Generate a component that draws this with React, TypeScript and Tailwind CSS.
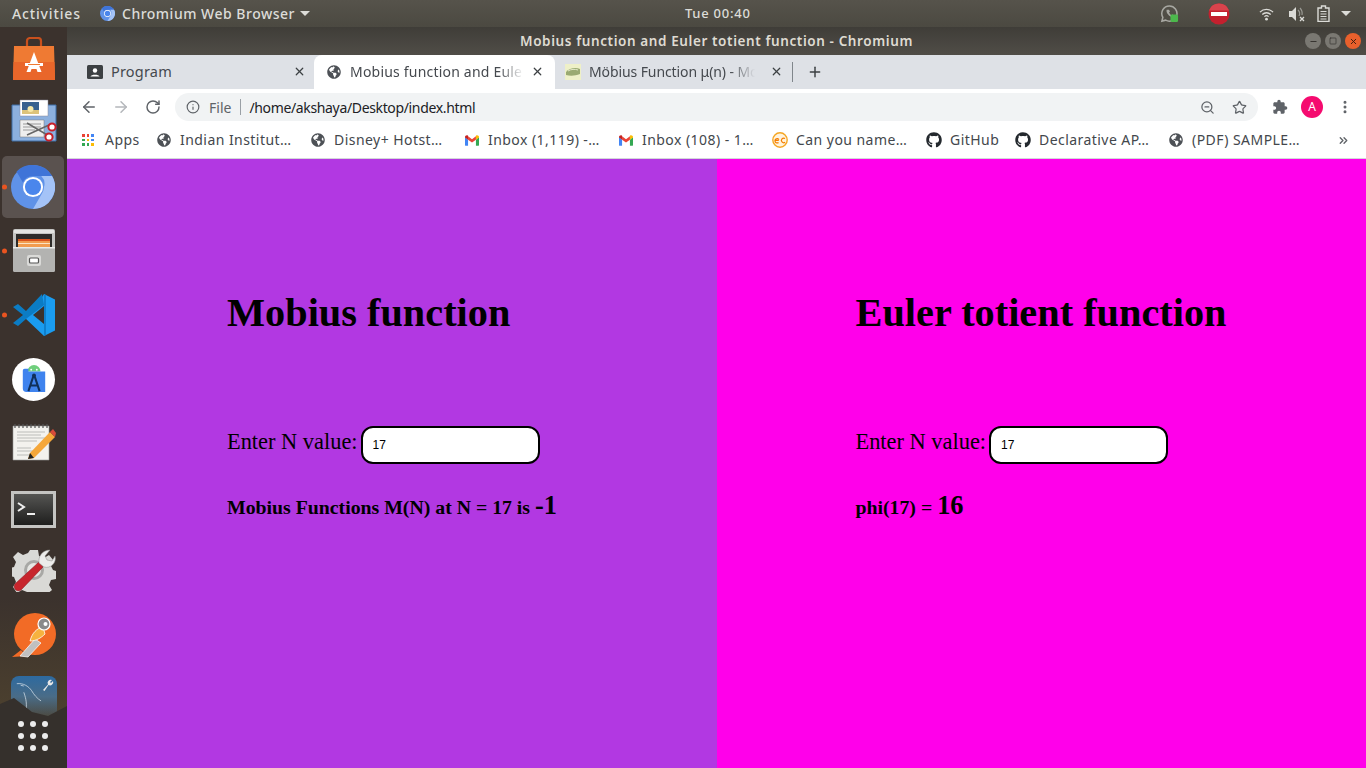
import { ArrowLeft, ArrowRight, RotateCw, Info, ZoomOut, Star, X, Plus, Minus, Square, ChevronsRight, EllipsisVertical } from "lucide-react";
import { FaGithub, FaGlobeAmericas } from "react-icons/fa";
import { MdExtension } from "react-icons/md";

const ui = "font-['Noto_Sans',sans-serif]";

function Globe() {
  return <FaGlobeAmericas className="h-[14px] w-[14px] shrink-0 text-[#4d5156]" />;
}

function Gmail() {
  return (
    <svg viewBox="0 0 16 12" className="h-[11px] w-[14px] shrink-0">
      <path d="M0 2v9a1 1 0 0 0 1 1h2.500V5z" fill="#4285f4" />
      <path d="M16 2v9a1 1 0 0 1-1 1h-2.500V5z" fill="#34a853" />
      <path d="M3.500 5 8 8.400 12.500 5V1.200L8 4.600 3.500 1.200z" fill="#ea4335" />
      <path d="M0 2c0-1.700 2.200-2.600 3.500-1.500V5L0 2.500z" fill="#c5221f" />
      <path d="M16 2c0-1.700-2.200-2.600-3.500-1.500V5L16 2.500z" fill="#fbbc04" />
    </svg>
  );
}

function AppsGrid() {
  const colors = ["#ea4335", "#ea4335", "#4285f4", "#34a853", "#fbbc04", "#4285f4", "#34a853", "#34a853", "#fbbc04"];
  return (
    <div className="grid h-[12px] w-[12px] shrink-0 grid-cols-3 gap-[2px]">
      {colors.map((c, i) => (
        <span key={i} style={{ backgroundColor: c }} />
      ))}
    </div>
  );
}

function EcIcon() {
  return (
    <svg viewBox="0 0 16 16" className="h-[16px] w-[16px] shrink-0">
      <circle cx="8" cy="8" r="7.200" fill="#fff3dc" stroke="#f5a623" strokeWidth="1.400" />
      <path d="M2.800 8.400h4M7 7.500a2.200 2.200 0 1 0-.5 3M13 6.500a2.300 2.300 0 1 0 0 3.800" fill="none" stroke="#f57c00" strokeWidth="1.200" />
    </svg>
  );
}

function Bookmark({ icon, label, className, gap = "ml-[9px]" }: { icon: React.ReactNode; label: string; className: string; gap?: string }) {
  return (
    <div className={`flex h-full shrink-0 items-center ${className}`}>
      {icon}
      <span className={`${gap} whitespace-nowrap pb-[2px] text-[14px] tracking-[0.45px] text-[#43474c]`}>{label}</span>
    </div>
  );
}

function ChromiumIcon({ size }: { size: string }) {
  return (
    <svg viewBox="0 0 48 48" className={size}>
      <circle cx="24" cy="24" r="24" fill="#5f92e8" />
      <path d="M24 0a24 24 0 0 1 20.800 12H24a12 12 0 0 0-11 7L6 7A24 24 0 0 1 24 0z" fill="#3f74d8" />
      <path d="M44.800 12A24 24 0 0 1 24 48l10.400-18A12 12 0 0 0 36 24a12 12 0 0 0-3-12z" fill="#a4c3f7" />
      <circle cx="24" cy="24" r="11" fill="#fff" />
      <circle cx="24" cy="24" r="8.800" fill="#4a86ec" />
    </svg>
  );
}

function RunningDot() {
  return <span className="absolute left-[2px] top-1/2 h-[5px] w-[5px] -translate-y-1/2 rounded-full bg-[#e95420]" />;
}

function StoreIcon() {
  return (
    <svg viewBox="0 0 42 43" className="h-[43px] w-[42px]">
      <path d="M14 11V4a3 3 0 0 1 3-3h8a3 3 0 0 1 3 3v7" fill="none" stroke="#c9501d" strokeWidth="2.200" />
      <path d="M1 9h40l1 34H0z" fill="#ef7a33" />
      <path d="M.5 25h41l.5 18H0z" fill="#e9662a" />
      <path d="M21 15 13.500 35h4l1-3h5l1 3h4z" fill="#fff" />
      <path d="M12 26h18v3H12z" fill="#fff" />
      <path d="M15 27h12v1H15z" fill="#ef7a33" />
    </svg>
  );
}

function ScreenshotIcon() {
  return (
    <svg viewBox="0 0 46 44" className="h-[44px] w-[46px]">
      <path d="M1 6h44v36H1z" fill="#8cb0de" stroke="#3f6fa8" />
      <path d="M9 1h28v16H9z" fill="#fff" stroke="#889" strokeWidth="0.500" />
      <path d="M11 3h17v12H11z" fill="#38618f" />
      <path d="M11 11h17v4H11z" fill="#dcc37a" />
      <circle cx="19.500" cy="10" r="3" fill="#f6e8a8" />
      <path d="M9 21h24v17H9z" fill="#eee" stroke="#777" strokeWidth="0.500" />
      <path d="M12 25h18M12 28h18M12 31h12" stroke="#999" />
      <path d="M16 24 38 37M16 36l22-10" stroke="#666" strokeWidth="1.500" />
      <circle cx="41" cy="28" r="3.600" fill="#fff" stroke="#c8202a" strokeWidth="2" />
      <circle cx="38" cy="38" r="3.600" fill="#fff" stroke="#c8202a" strokeWidth="2" />
    </svg>
  );
}

function FilesIcon() {
  return (
    <svg viewBox="0 0 42 43" className="h-[43px] w-[42px]">
      <rect x="0" y="0" width="42" height="43" rx="2" fill="#c4c4c2" />
      <path d="M1 1h40v3H1z" fill="#e4e4e2" />
      <path d="M3 5h36v13H3z" fill="#2d2b29" />
      <path d="M5 10h32v8H5z" fill="#f29c4f" />
      <path d="M5 10h32v2H5z" fill="#d9531e" />
      <path d="M5 14h32v1H5z" fill="#fce3c2" />
      <path d="M0 18h42v23a2 2 0 0 1-2 2H2a2 2 0 0 1-2-2z" fill="#b3b3b1" />
      <path d="M0 18h42v1.500H0z" fill="#ececea" />
      <rect x="14" y="26" width="14" height="11" rx="2" fill="#dadad8" />
      <rect x="16.500" y="29" width="9" height="5" rx="1" fill="#fff" stroke="#555" strokeWidth="1.200" />
    </svg>
  );
}

function VsCodeIcon() {
  return (
    <svg viewBox="0 0 42 42" className="h-[42px] w-[42px]">
      <path d="M31 0 42 5.500v31L31 42 12 24l8-7z" fill="#1a9cf0" />
      <path d="M31 0 31 42 33 41V1z" fill="#0f7fcc" />
      <path d="M31 11 13 25 5 32 0 29l10-8L0 13l5-3 8 7L29 0z" fill="#0b7cc4" />
      <path d="M31 12v18l-11-9z" fill="#3b322d" />
    </svg>
  );
}

function StudioIcon() {
  return (
    <div className="flex h-[43px] w-[43px] items-center justify-center rounded-full bg-white">
      <svg viewBox="0 0 30 32" className="h-[30px] w-[28px]">
        <path d="M8 8a7 7 0 0 1 14 0z" fill="#6fcf7c" />
        <circle cx="12" cy="6" r="1" fill="#fff" />
        <circle cx="18" cy="6" r="1" fill="#fff" />
        <path d="M3 7a2 2 0 0 1 2-2h4v3h18v22H7a4 4 0 0 1-4-4z" fill="#3f83ee" />
        <path d="M15 11 9 29M15 11l6 18M11 23h8" fill="none" stroke="#10305a" strokeWidth="2.200" />
        <circle cx="15" cy="12" r="2" fill="#10305a" />
      </svg>
    </div>
  );
}

function NotepadIcon() {
  return (
    <svg viewBox="0 0 46 38" className="h-[38px] w-[46px]">
      <path d="M2 3h36v34H2z" fill="#f3f2ee" stroke="#999" strokeWidth="0.600" />
      <path d="M4 1v4M8 1v4M12 1v4M16 1v4M20 1v4M24 1v4M28 1v4M32 1v4M36 1v4" stroke="#555" strokeWidth="1.200" />
      <path d="M6 9h28M6 12h24M6 15h28M6 18h20M6 25h14M6 28h18M6 32h16" stroke="#b5b5b2" strokeWidth="0.900" />
      <path d="M19 30 39 9l5 5-21 21-6 1z" fill="#f5a73a" />
      <path d="M39 9l3-3 3 4-1 4z" fill="#d84a3a" />
      <path d="M17 36l2-6 4 5z" fill="#222" />
    </svg>
  );
}

function TerminalIcon() {
  return (
    <div className="h-[37px] w-[45px] border-[3px] border-[#c4c4c2] bg-[linear-gradient(#555553,#1e1e1d)] pl-[3px] pt-[6px]">
      <svg viewBox="0 0 30 20" className="h-[20px] w-[30px]">
        <path d="M1 3l6 4-6 4" fill="none" stroke="#eee" strokeWidth="2" />
        <path d="M10 14h8" stroke="#eee" strokeWidth="2" />
      </svg>
    </div>
  );
}

function SettingsIcon() {
  return (
    <svg viewBox="0 0 44 44" className="h-[44px] w-[44px]">
      <path
        d="M18 2h8l1 6 5 2 5-3 5 6-3 5 2 4 3 1v8l-5 1-2 5 3 5-6 5-5-3-4 1-1 3h-8l-1-4-5-2-5 3-4-6 3-5-2-5-5-1v-8l5-1 2-5-3-5 5-5 5 3 5-2z"
        fill="#d9d9d6"
      />
      <circle cx="22" cy="22" r="10" fill="#a8a8a5" />
      <circle cx="22" cy="22" r="7" fill="#e6e6e3" />
      <path d="M4 35 27 14l4 5L9 42a3.500 3.500 0 0 1-5-7z" fill="#c7252c" stroke="#8f1a20" strokeWidth="0.600" />
      <path d="M27 15c-1-6 3-13 11-13l-5 6 2 4 5 1 3-5c2 7-5 13-11 11z" fill="#ececea" stroke="#8d8d8a" strokeWidth="0.500" />
    </svg>
  );
}

function PostmanIcon() {
  return (
    <svg viewBox="0 0 44 45" className="h-[45px] w-[44px]">
      <circle cx="23" cy="21" r="21" fill="#f26b26" />
      <path d="M0 44 9 37l6 6z" fill="#f26b26" />
      <path d="M8 43 23 26l6 4-13 14z" fill="#c0c0c0" stroke="#fff" strokeWidth="0.700" />
      <path d="M18 28c2-8 7-13 13-14l2 7c-4 4-9 7-15 7z" fill="#f6b23f" stroke="#fff" strokeWidth="0.800" />
      <circle cx="32" cy="11" r="6" fill="#8a8a8a" stroke="#fff" strokeWidth="1.200" />
      <circle cx="33.500" cy="11" r="2" fill="#fff" />
    </svg>
  );
}

function MysqlIcon() {
  return (
    <div className="relative h-[46px] w-[46px] rounded-t-[8px] bg-[linear-gradient(#2d6aa0,#4a6c87_45%,rgba(80,70,50,0.1))]">
      <svg viewBox="0 0 46 40" className="absolute left-[5px] top-[4px] h-[34px] w-[36px]">
        <path d="M1 3c8-1 15 3 19 9 3 5 7 10 12 13M10 14c2 6 4 12 3 22M6 5l4 1" fill="none" stroke="#cfdbe6" strokeWidth="1" />
      </svg>
      <svg viewBox="0 0 12 12" className="absolute right-[3px] top-[3px] h-[12px] w-[12px]">
        <path d="M1 11 6 5.500A3.200 3.200 0 0 1 10 1L8 3l1 1 2-2a3.200 3.200 0 0 1-4.500 4L2.500 12z" fill="#e8e8e8" />
      </svg>
    </div>
  );
}

function DockGrid() {
  return (
    <div className="grid grid-cols-3 gap-[6px]">
      {Array.from({ length: 9 }).map((_, i) => (
        <span key={i} className="h-[6px] w-[6px] rounded-full bg-[#ececec]" />
      ))}
    </div>
  );
}

function Dock() {
  return (
    <aside className="relative flex w-[67px] shrink-0 flex-col items-center overflow-hidden bg-[#3b322d]">
      <div className="absolute inset-x-0 bottom-0 h-[170px] bg-[linear-gradient(transparent,#54472f)]" />
      <div className="relative flex h-[63px] w-full items-center justify-center"><StoreIcon /></div>
      <div className="relative flex h-[62px] w-full items-center justify-center"><ScreenshotIcon /></div>
      <div className="relative flex h-[70px] w-full items-center pl-[2px]">
        <div className="flex h-[62px] w-[62px] items-center justify-center rounded-[5px] bg-[#5a524f]">
          <ChromiumIcon size="h-[44px] w-[44px]" />
        </div>
        <RunningDot />
      </div>
      <div className="relative flex h-[57px] w-full items-center justify-center"><RunningDot /><FilesIcon /></div>
      <div className="relative flex h-[72px] w-full items-center justify-center"><RunningDot /><VsCodeIcon /></div>
      <div className="relative flex h-[56px] w-full items-center justify-center"><StudioIcon /></div>
      <div className="relative flex h-[70px] w-full items-center justify-center"><NotepadIcon /></div>
      <div className="relative flex h-[64px] w-full items-center justify-center"><TerminalIcon /></div>
      <div className="relative flex h-[58px] w-full items-center justify-center"><SettingsIcon /></div>
      <div className="relative flex h-[72px] w-full items-center justify-center"><PostmanIcon /></div>
      <div className="relative flex w-full shrink-0 justify-center pt-[5px]"><MysqlIcon /></div>
      <svg viewBox="0 0 67 80" className="absolute bottom-0 left-0 h-[80px] w-[67px]" preserveAspectRatio="none">
        <path d="M0 16 14 10 32 24 48 28 67 18V80H0z" fill="#35302c" />
      </svg>
      <div className="absolute bottom-[17px] left-[18px]"><DockGrid /></div>
    </aside>
  );
}

function TopBar() {
  return (
    <header className="flex h-[27px] items-center bg-[linear-gradient(#56534b,#4b4941)] text-[14px] font-medium text-[#dcdcd8]">
      <span className="ml-[12px] w-[88px] tracking-[0.85px]">Activities</span>
      <ChromiumIcon size="h-[15px] w-[15px] mr-[7px]" />
      <span className="tracking-[0.5px]">Chromium Web Browser</span>
      <span className="ml-[5px] h-0 w-0 border-x-[5px] border-t-[5px] border-x-transparent border-t-[#dcdcd8]" />
      <span className="ml-[375px] text-[13px] tracking-[0.75px]">Tue 00:40</span>
      <div className="ml-auto flex items-center">
        <svg viewBox="0 0 20 20" className="mr-[29px] h-[19px] w-[19px]">
          <path d="M10 2a8 8 0 0 0-7 12l-1 4 4-1a8 8 0 1 0 4-15z" fill="none" stroke="#a8a8a2" strokeWidth="1.600" />
          <path d="M7 6c-1 3 3 8 7 8l1-2-2-1-1 1c-1-.5-2-2-2.500-3l1-1-1-2z" fill="#a8a8a2" />
          <rect x="11" y="11" width="8" height="8" rx="1.500" fill="#4cb84c" />
        </svg>
        <svg viewBox="0 0 22 22" className="mr-[29px] h-[22px] w-[22px]">
          <circle cx="11" cy="11" r="10.500" fill="#c3202e" />
          <path d="M11 .5a10.500 10.500 0 0 1 10 7H1a10.500 10.500 0 0 1 10-7z" fill="#d8434c" />
          <rect x="3" y="9" width="16" height="4" fill="#fff" />
        </svg>
        <svg viewBox="0 0 16 14" className="mr-[14px] h-[14px] w-[15px]">
          <path d="M1 5a10 10 0 0 1 14 0M3.500 7.500a6.500 6.500 0 0 1 9 0M5.800 9.800a3.200 3.200 0 0 1 4.400 0" fill="none" stroke="#dcdcd8" strokeWidth="1.400" />
          <circle cx="8" cy="12.500" r="1.500" fill="#dcdcd8" />
        </svg>
        <svg viewBox="0 0 17 16" className="mr-[12px] h-[16px] w-[17px]">
          <path d="M1 5h3l4-4v14l-4-4H1z" fill="#dcdcd8" />
          <path d="M10 4a5 5 0 0 1 1 6M12 2a8 8 0 0 1 2 7" fill="none" stroke="#9a9a94" strokeWidth="1.200" />
          <path d="M12 11l4 4M16 11l-4 4" stroke="#dcdcd8" strokeWidth="1.300" />
        </svg>
        <svg viewBox="0 0 13 17" className="mr-[11px] h-[17px] w-[13px]">
          <path d="M1 3h3.500V1h4v2H12v13.500H1z" fill="none" stroke="#dcdcd8" strokeWidth="1.400" />
          <path d="M3.500 6.500h6M3.500 9h6M3.500 11.500h6M3.500 14h6" stroke="#dcdcd8" strokeWidth="1.200" />
        </svg>
        <span className="mr-[15px] h-0 w-0 border-x-[5px] border-t-[5px] border-x-transparent border-t-[#dcdcd8]" />
      </div>
    </header>
  );
}

function WindowButton({ className, children }: { className: string; children: React.ReactNode }) {
  return <div className={`flex h-[16px] w-[16px] items-center justify-center rounded-full ${className}`}>{children}</div>;
}

function TitleBar() {
  return (
    <div className="relative flex h-[28px] items-center justify-center bg-[linear-gradient(#3f3d38,#504d47)]">
      <span className="pt-[1px] text-[13.500px] font-semibold tracking-[0.6px] text-[#dfdbd2]">Mobius function and Euler totient function - Chromium</span>
      <div className="absolute right-[5px] top-[6px] flex gap-[4px]">
        <WindowButton className="bg-[#7a7872]"><Minus className="h-[9px] w-[9px] text-[#33312d]" strokeWidth={2.500} /></WindowButton>
        <WindowButton className="bg-[#7a7872]"><Square className="h-[8px] w-[8px] text-[#33312d]" strokeWidth={2} /></WindowButton>
        <WindowButton className="bg-[#e9602c]"><X className="h-[9px] w-[9px] text-[#3b1d0e]" strokeWidth={2.500} /></WindowButton>
      </div>
    </div>
  );
}

function ProgramIcon() {
  return (
    <svg viewBox="0 0 16 14" className="h-[14px] w-[16px] shrink-0">
      <rect width="16" height="14" rx="1.500" fill="#3c4043" />
      <circle cx="8" cy="5.500" r="2.200" fill="#fff" />
      <path d="M3.500 11.500c.5-2.500 8.500-2.500 9 0z" fill="#fff" />
    </svg>
  );
}

function TabStrip() {
  return (
    <div className="flex h-[34px] items-stretch bg-[#dee1e6] pb-[1px] text-[14px] tracking-[0.2px] text-[#45494e]">
      <div className="flex w-[247px] items-center pl-[20px]">
        <ProgramIcon />
        <span className="ml-[8px] text-[14.500px]">Program</span>
        <X className="ml-auto mr-[8px] h-[13px] w-[13px] text-[#3c4043]" strokeWidth={2.200} />
      </div>
      <div className="-mb-[1px] flex w-[241px] items-center rounded-t-[8px] bg-white pb-[1px] pl-[13px]">
        <FaGlobeAmericas className="h-[14px] w-[14px] shrink-0 text-[#4d5156]" />
        <span className="ml-[9px] w-[174px] overflow-hidden whitespace-nowrap [mask-image:linear-gradient(to_right,black_85%,transparent)]">Mobius function and Eule</span>
        <X className="ml-auto mr-[11px] h-[13px] w-[13px] text-[#3c4043]" strokeWidth={2.200} />
      </div>
      <div className="flex w-[238px] items-center pl-[10px]">
        <svg viewBox="0 0 16 16" className="h-[16px] w-[16px] shrink-0">
          <rect width="16" height="16" fill="#eef0c8" />
          <path d="M1 8c3-4 10-5 14-3v5c-5 2-10 2-14 1z" fill="#9aaa72" />
          <path d="M3 7c3-2 7-2 10-1" stroke="#e3e8c8" fill="none" />
        </svg>
        <span className="ml-[8px] w-[166px] overflow-hidden whitespace-nowrap tracking-[-0.1px] [mask-image:linear-gradient(to_right,black_85%,transparent)]">Möbius Function μ(n) - Mo</span>
        <X className="ml-[15px] h-[13px] w-[13px] shrink-0 text-[#3c4043]" strokeWidth={2.200} />
        <span className="ml-[9px] h-[20px] w-px bg-[#80868b]" />
      </div>
      <div className="flex items-center pl-[14px]">
        <Plus className="h-[16px] w-[16px] text-[#3c4043]" strokeWidth={2.200} />
      </div>
    </div>
  );
}

function Toolbar() {
  return (
    <div className="flex h-[33px] items-center bg-white pt-[3px]">
      <ArrowLeft className="ml-[13px] h-[18px] w-[18px] text-[#5f6368]" strokeWidth={2} />
      <ArrowRight className="ml-[14px] h-[18px] w-[18px] text-[#b4b7bb]" strokeWidth={2} />
      <RotateCw className="ml-[15px] h-[16px] w-[16px] text-[#5f6368]" strokeWidth={2.200} />
      <div className="ml-[14px] flex h-[28px] w-[1083px] items-center rounded-full bg-[#f1f3f4] text-[14px]">
        <Info className="ml-[11px] h-[14px] w-[14px] text-[#5f6368]" strokeWidth={2} />
        <span className="ml-[9px] text-[#5f6368]">File</span>
        <span className="ml-[9px] h-[16px] w-px bg-[#9aa0a6]" />
        <span className="ml-[8px] tracking-[-0.35px] text-[#202124]">/home/akshaya/Desktop/index.html</span>
        <ZoomOut className="ml-auto h-[15px] w-[15px] text-[#5f6368]" strokeWidth={2} />
        <Star className="ml-[17px] mr-[11px] h-[15px] w-[15px] text-[#5f6368]" strokeWidth={2} />
      </div>
      <MdExtension className="ml-[14px] h-[16px] w-[16px] text-[#5f6368]" />
      <div className="ml-[13px] flex h-[22px] w-[22px] items-center justify-center rounded-full bg-[#f50b6f] text-[12px] text-white">A</div>
      <EllipsisVertical className="ml-[14px] h-[16px] w-[16px] text-[#5f6368]" strokeWidth={2.500} />
    </div>
  );
}

function BookmarksBar() {
  return (
    <div className="flex h-[37px] items-center border-b border-[#d4d6da] bg-white pl-[15px]">
      <Bookmark icon={<AppsGrid />} label="Apps" gap="ml-[11px]" className="w-[75px]" />
      <Bookmark icon={<Globe />} label="Indian Institut…" className="w-[154px]" />
      <Bookmark icon={<Globe />} label="Disney+ Hotst…" className="w-[154px]" />
      <Bookmark icon={<Gmail />} label="Inbox (1,119) -…" className="w-[154px]" />
      <Bookmark icon={<Gmail />} label="Inbox (108) - 1…" className="w-[153px]" />
      <Bookmark icon={<EcIcon />} label="Can you name…" gap="ml-[8px]" className="w-[154px]" />
      <Bookmark icon={<FaGithub className="h-[16px] w-[16px] shrink-0 text-[#24292e]" />} label="GitHub" gap="ml-[8px]" className="w-[89px]" />
      <Bookmark icon={<FaGithub className="h-[16px] w-[16px] shrink-0 text-[#24292e]" />} label="Declarative AP…" gap="ml-[8px]" className="w-[154px]" />
      <Bookmark icon={<Globe />} label="(PDF) SAMPLE…" className="w-[168px]" />
      <ChevronsRight className="h-[13px] w-[13px] text-[#5f6368]" strokeWidth={2.500} />
    </div>
  );
}

function Panel({ title, className, children }: { title: string; className: string; children: React.ReactNode }) {
  return (
    <section className={`pt-[129px] font-['Liberation_Serif',serif] text-black ${className}`}>
      <h1 className="text-[40.320px] font-bold leading-[50px]">{title}</h1>
      <div className="mt-[88px] flex h-[38px] items-center">
        <label className="-mt-[6px] text-[22.400px]">Enter N value:</label>
        <input
          readOnly
          value="17"
          className="ml-[3px] h-[38px] w-[179px] rounded-[12px] border-[2px] border-black bg-white px-[10px] font-['Liberation_Sans',sans-serif] text-[12px] text-black outline-none"
        />
      </div>
      <div className="mt-[26px]">{children}</div>
    </section>
  );
}

export default function App() {
  return (
    <div className={`flex h-[768px] w-[1366px] flex-col overflow-hidden ${ui}`}>
      <TopBar />
      <div className="flex min-h-0 flex-1">
        <Dock />
        <main className="flex min-w-0 flex-1 flex-col">
          <TitleBar />
          <TabStrip />
          <Toolbar />
          <BookmarksBar />
          <div className="grid min-h-0 flex-1 grid-cols-2">
            <Panel title="Mobius function" className="bg-[#b238e2] pl-[160px]">
              <p className="text-[19.800px] font-bold leading-[30px]">
                Mobius Functions M(N) at N = 17 is <span className="text-[26.400px]">-1</span>
              </p>
            </Panel>
            <Panel title="Euler totient function" className="bg-[#ff00ea] pl-[139px]">
              <p className="text-[19.800px] font-bold leading-[30px]">
                phi(17) = <span className="text-[26.400px]">16</span>
              </p>
            </Panel>
          </div>
        </main>
      </div>
    </div>
  );
}
